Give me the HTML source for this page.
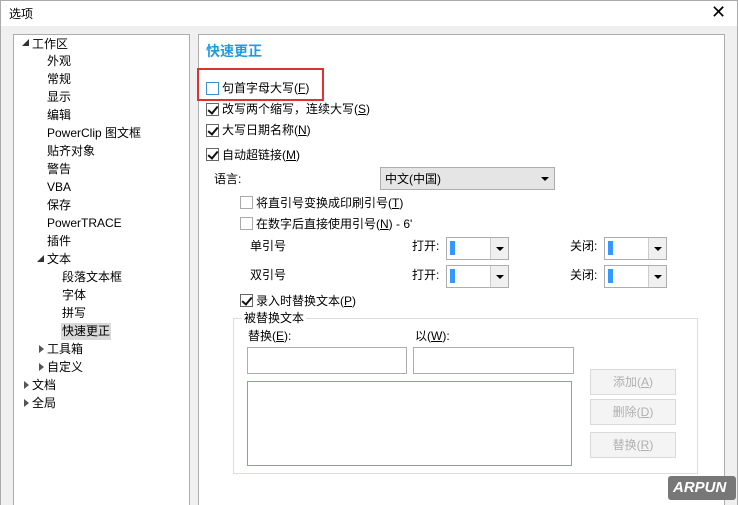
<!DOCTYPE html>
<html><head><meta charset="utf-8"><style>
*{margin:0;padding:0;box-sizing:border-box}
html,body{width:738px;height:505px;overflow:hidden}
body{background:#f0f0f0;font-family:"Liberation Sans","Noto Sans CJK SC",sans-serif;font-size:12px;color:#000;position:relative}
.a{position:absolute;white-space:nowrap;line-height:16px}
.cb{position:absolute;width:13px;height:13px;border:1px solid #666;background:#fff}
.cb.on::after{content:"";position:absolute;left:3px;top:0px;width:4px;height:8px;border:solid #111;border-width:0 2px 2px 0;transform:rotate(40deg)}
.cb.off{border-color:#aaa}
.box{position:absolute;background:#fff;border:1px solid #adadad}
.combo{position:absolute;background:#fff;border:1px solid #adadad}
.combo .ar{position:absolute;right:0;top:0;bottom:0;width:18px;border-left:1px solid #ccc;background:#f0f0f0}
.combo .ar::after{content:"";position:absolute;left:5px;top:9px;border:4px solid transparent;border-top:4px solid #000;border-bottom:0}
.sel{position:absolute;left:3px;top:3px;width:5px;height:14px;background:#3399ff}
.btn{position:absolute;width:86px;height:26px;background:#f4f4f4;border:1px solid #dadada;color:#b0b0b0;text-align:center;line-height:24px}
u{text-decoration:underline}
.tri{position:absolute;width:0;height:0}
</style></head><body>
<div style="position:absolute;left:0;top:0;width:738px;height:26px;background:#fff;border:1px solid #aaa;border-bottom:none"></div>
<div class="a" style="left:9px;top:6px">选项</div>
<div class="a" style="left:711px;top:2px;font-size:18px;line-height:20px">✕</div>
<div style="position:absolute;left:0;top:26px;width:1px;height:479px;background:#aaa"></div>
<div style="position:absolute;left:737px;top:0;width:1px;height:505px;background:#aaa"></div>

<div class="box" style="left:13px;top:34px;width:177px;height:480px"></div>
<div class="tri" style="left:22px;top:39px;border-left:7px solid transparent;border-bottom:7px solid #333"></div>
<div class="a" style="left:32px;top:36px">工作区</div>
<div class="a" style="left:47px;top:53px">外观</div>
<div class="a" style="left:47px;top:71px">常规</div>
<div class="a" style="left:47px;top:89px">显示</div>
<div class="a" style="left:47px;top:107px">编辑</div>
<div class="a" style="left:47px;top:125px">PowerClip 图文框</div>
<div class="a" style="left:47px;top:143px">贴齐对象</div>
<div class="a" style="left:47px;top:161px">警告</div>
<div class="a" style="left:47px;top:179px">VBA</div>
<div class="a" style="left:47px;top:197px">保存</div>
<div class="a" style="left:47px;top:215px">PowerTRACE</div>
<div class="a" style="left:47px;top:233px">插件</div>
<div class="tri" style="left:37px;top:255px;border-left:7px solid transparent;border-bottom:7px solid #333"></div>
<div class="a" style="left:47px;top:251px">文本</div>
<div class="a" style="left:62px;top:269px">段落文本框</div>
<div class="a" style="left:62px;top:287px">字体</div>
<div class="a" style="left:62px;top:305px">拼写</div>
<div style="position:absolute;left:61px;top:323px;width:50px;height:17px;background:#d9d9d9"></div>
<div class="a" style="left:62px;top:323px">快速更正</div>
<div class="tri" style="left:39px;top:345px;border-top:4px solid transparent;border-bottom:4px solid transparent;border-left:5px solid #555"></div>
<div class="a" style="left:47px;top:341px">工具箱</div>
<div class="tri" style="left:39px;top:363px;border-top:4px solid transparent;border-bottom:4px solid transparent;border-left:5px solid #555"></div>
<div class="a" style="left:47px;top:359px">自定义</div>
<div class="tri" style="left:24px;top:381px;border-top:4px solid transparent;border-bottom:4px solid transparent;border-left:5px solid #555"></div>
<div class="a" style="left:32px;top:377px">文档</div>
<div class="tri" style="left:24px;top:399px;border-top:4px solid transparent;border-bottom:4px solid transparent;border-left:5px solid #555"></div>
<div class="a" style="left:32px;top:395px">全局</div>

<div class="box" style="left:198px;top:34px;width:527px;height:480px"></div>
<div class="a" style="left:206px;top:42px;font-size:14px;font-weight:bold;color:#1e9be0;line-height:18px">快速更正</div>
<div style="position:absolute;left:197px;top:68px;width:127px;height:33px;border:2px solid #e03030"></div>
<div class="cb" style="left:206px;top:82px;border-color:#3c8fd0"></div>
<div class="a" style="left:222px;top:80px">句首字母大写(<u>F</u>)</div>
<div class="cb on" style="left:206px;top:103px"></div>
<div class="a" style="left:222px;top:101px">改写两个缩写，连续大写(<u>S</u>)</div>
<div class="cb on" style="left:206px;top:124px"></div>
<div class="a" style="left:222px;top:122px">大写日期名称(<u>N</u>)</div>
<div class="cb on" style="left:206px;top:148px"></div>
<div class="a" style="left:222px;top:147px">自动超链接(<u>M</u>)</div>
<div class="a" style="left:214px;top:171px">语言:</div>
<div style="position:absolute;left:380px;top:167px;width:175px;height:23px;background:#e5e5e5;border:1px solid #adadad"></div>
<div class="a" style="left:385px;top:171px">中文(中国)</div>
<div class="tri" style="left:541px;top:177px;border-left:4px solid transparent;border-right:4px solid transparent;border-top:4px solid #000"></div>
<div class="cb off" style="left:240px;top:196px"></div>
<div class="a" style="left:256px;top:195px">将直引号变换成印刷引号(<u>T</u>)</div>
<div class="cb off" style="left:240px;top:217px"></div>
<div class="a" style="left:256px;top:216px">在数字后直接使用引号(<u>N</u>) - 6'</div>
<div class="a" style="left:250px;top:238px">单引号</div>
<div class="a" style="left:412px;top:238px">打开:</div>
<div class="combo" style="left:446px;top:237px;width:63px;height:23px"><div class="sel"></div><div class="ar"></div></div>
<div class="a" style="left:570px;top:238px">关闭:</div>
<div class="combo" style="left:604px;top:237px;width:63px;height:23px"><div class="sel"></div><div class="ar"></div></div>
<div class="a" style="left:250px;top:267px">双引号</div>
<div class="a" style="left:412px;top:267px">打开:</div>
<div class="combo" style="left:446px;top:265px;width:63px;height:23px"><div class="sel"></div><div class="ar"></div></div>
<div class="a" style="left:570px;top:267px">关闭:</div>
<div class="combo" style="left:604px;top:265px;width:63px;height:23px"><div class="sel"></div><div class="ar"></div></div>
<div class="cb on" style="left:240px;top:294px"></div>
<div class="a" style="left:256px;top:293px">录入时替换文本(<u>P</u>)</div>
<div style="position:absolute;left:233px;top:318px;width:465px;height:156px;border:1px solid #dcdcdc"></div>
<div class="a" style="left:242px;top:310px;background:#fff;padding:0 2px">被替换文本</div>
<div class="a" style="left:248px;top:328px">替换(<u>E</u>):</div>
<div class="a" style="left:415px;top:328px">以(<u>W</u>):</div>
<div class="box" style="left:247px;top:347px;width:160px;height:27px"></div>
<div class="box" style="left:413px;top:347px;width:161px;height:27px"></div>
<div style="position:absolute;left:247px;top:381px;width:325px;height:85px;border:1px solid #8fa095;background:#fff"></div>
<div class="btn" style="left:590px;top:369px">添加(<u>A</u>)</div>
<div class="btn" style="left:590px;top:399px">删除(<u>D</u>)</div>
<div class="btn" style="left:590px;top:432px">替换(<u>R</u>)</div>
<div style="position:absolute;left:668px;top:476px;width:68px;height:24px;background:#777;border-radius:3px"></div>
<div class="a" style="left:673px;top:479px;color:#fff;font-weight:bold;font-style:italic;font-size:15px;line-height:18px">ARPUN</div>
</body></html>
